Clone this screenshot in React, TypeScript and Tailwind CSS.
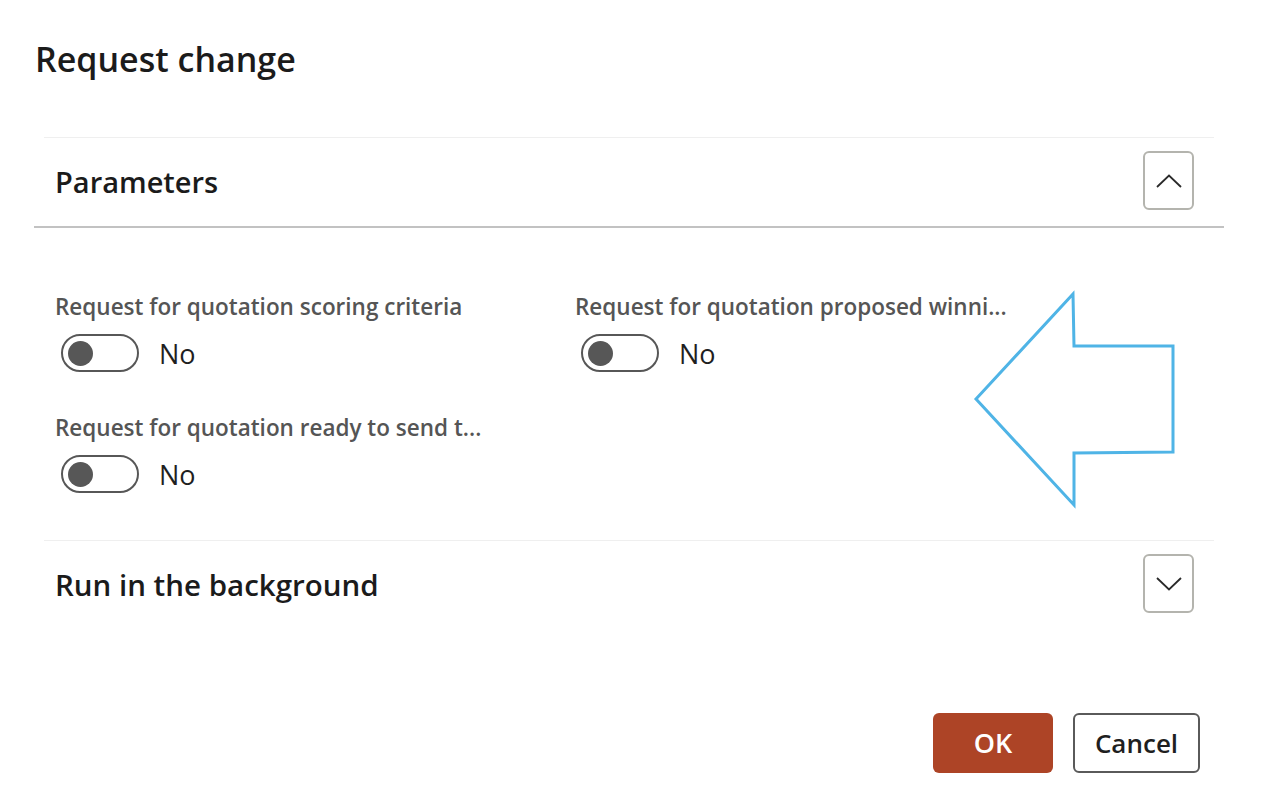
import React from 'react';

const font = { fontFamily: '"Open Sans", "Noto Sans", Arial, sans-serif' };

const Toggle = ({ label }: { label: string }) => (
  <div className="flex flex-col">
    <div className="h-[28px] flex items-center text-[22.5px] font-semibold text-[#555555] whitespace-nowrap">
      {label}
    </div>
    <div className="mt-[13px] flex items-center h-[38px]">
      <div className="ml-[6px] w-[78px] h-[38px] rounded-full border-2 border-[#575757] flex items-center px-[5px]">
        <div className="w-[25px] h-[25px] rounded-full bg-[#575757]" />
      </div>
      <span className="ml-[20px] mt-[3px] text-[27px] text-[#1f1f1f]">No</span>
    </div>
  </div>
);

const ChevronButton = ({ up }: { up: boolean }) => (
  <button className="self-start mt-[13px] w-[51px] h-[59px] rounded-[6px] border-2 border-[#b4b4ae] bg-white flex items-center justify-center">
    <svg width="26" height="14" viewBox="0 0 26 14" fill="none">
      {up ? (
        <path d="M1 13 L13 1.5 L25 13" stroke="#2a2a2a" strokeWidth="1.8" />
      ) : (
        <path d="M1 1 L13 12.5 L25 1" stroke="#2a2a2a" strokeWidth="1.8" />
      )}
    </svg>
  </button>
);

export default function App() {
  return (
    <div className="relative w-[1270px] h-[811px] bg-white overflow-hidden" style={font}>
      <div className="flex flex-col pl-[34px] pr-[46px]">
        {/* Title */}
        <h1 className="pt-[36px] pl-[1px] h-[137px] text-[34px] leading-[46px] font-semibold text-[#1b1b1b]">
          Request change
        </h1>

        {/* Parameters section */}
        <div className="mx-[10px] border-t border-[#efefef]" />
        <div className="mx-[10px] h-[88px] flex items-center justify-between pl-[11px] pr-[20px]">
          <span className="text-[29px] font-semibold text-[#1b1b1b]">Parameters</span>
          <ChevronButton up />
        </div>
        <div className="h-[2px] bg-[#c2c2c2]" />

        <div className="pl-[21px] pt-[65px] grid grid-cols-[520px_1fr] gap-y-[42px]">
          <Toggle label="Request for quotation scoring criteria" />
          <Toggle label="Request for quotation proposed winni..." />
          <Toggle label="Request for quotation ready to send t..." />
        </div>

        {/* Run in the background */}
        <div className="mt-[47px] mx-[10px] border-t border-[#efefef]" />
        <div className="mx-[10px] h-[88px] flex items-center justify-between pl-[11px] pr-[20px]">
          <span className="text-[29.5px] font-semibold text-[#1b1b1b]">Run in the background</span>
          <ChevronButton up={false} />
        </div>

        {/* Footer */}
        <div className="mt-[84px] flex justify-end gap-[20px] pr-[24px]">
          <button className="w-[120px] h-[60px] rounded-[6px] bg-[#ad4426] text-white text-[27px] font-semibold">
            OK
          </button>
          <button className="w-[127px] h-[60px] rounded-[6px] border-2 border-[#5a5a5a] bg-white text-[#1f1f1f] text-[26px] font-semibold">
            Cancel
          </button>
        </div>
      </div>

      {/* Annotation arrow */}
      <svg className="absolute left-[970px] top-[288px]" width="212" height="224" viewBox="0 0 212 224" fill="none">
        <path
          d="M6 111 L103 6 L104 58 L203 58 L203 164 L104 165 L104 217 Z"
          stroke="#4fb4e6"
          strokeWidth="3"
          strokeLinejoin="miter"
        />
      </svg>
    </div>
  );
}
